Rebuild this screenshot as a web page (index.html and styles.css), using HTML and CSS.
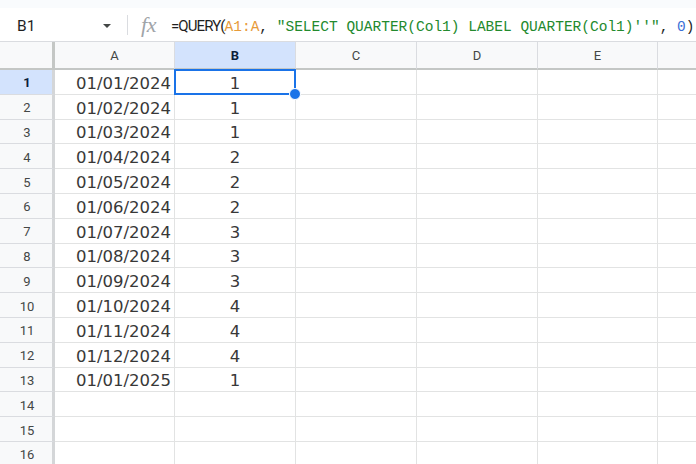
FILE: index.html
```html
<!DOCTYPE html>
<html>
<head>
<meta charset="utf-8">
<link rel="stylesheet" href="styles.css">
</head>
<body>
<div class="topstrip"></div>
<div class="fbar">
  <div class="namebox">
    <span class="nb-text">B1</span>
    <span class="nb-caret"></span>
  </div>
  <div class="fdivider"></div>
  <div class="fx">fx</div>
  <div class="formula"><span class="fn">=QUERY(</span><span class="mono"><span class="ref">A1:A</span>, <span class="str">"SELECT QUARTER(Col1) LABEL QUARTER(Col1)''"</span>, <span class="num">0</span>)</span></div>
</div>
<div class="sheet">
  <div class="corner"></div>
  <div class="ch">A</div>
  <div class="ch sel">B</div>
  <div class="ch">C</div>
  <div class="ch">D</div>
  <div class="ch">E</div>
  <div class="ch last"></div>

  <div class="rh sel">1</div><div class="c date">01/01/2024</div><div class="c mid selcell">1<div class="selbox"><div class="handle"></div></div></div><div class="c"></div><div class="c"></div><div class="c"></div><div class="c last"></div>
  <div class="rh">2</div><div class="c date">01/02/2024</div><div class="c mid">1</div><div class="c"></div><div class="c"></div><div class="c"></div><div class="c last"></div>
  <div class="rh">3</div><div class="c date">01/03/2024</div><div class="c mid">1</div><div class="c"></div><div class="c"></div><div class="c"></div><div class="c last"></div>
  <div class="rh">4</div><div class="c date">01/04/2024</div><div class="c mid">2</div><div class="c"></div><div class="c"></div><div class="c"></div><div class="c last"></div>
  <div class="rh">5</div><div class="c date">01/05/2024</div><div class="c mid">2</div><div class="c"></div><div class="c"></div><div class="c"></div><div class="c last"></div>
  <div class="rh">6</div><div class="c date">01/06/2024</div><div class="c mid">2</div><div class="c"></div><div class="c"></div><div class="c"></div><div class="c last"></div>
  <div class="rh">7</div><div class="c date">01/07/2024</div><div class="c mid">3</div><div class="c"></div><div class="c"></div><div class="c"></div><div class="c last"></div>
  <div class="rh">8</div><div class="c date">01/08/2024</div><div class="c mid">3</div><div class="c"></div><div class="c"></div><div class="c"></div><div class="c last"></div>
  <div class="rh">9</div><div class="c date">01/09/2024</div><div class="c mid">3</div><div class="c"></div><div class="c"></div><div class="c"></div><div class="c last"></div>
  <div class="rh">10</div><div class="c date">01/10/2024</div><div class="c mid">4</div><div class="c"></div><div class="c"></div><div class="c"></div><div class="c last"></div>
  <div class="rh">11</div><div class="c date">01/11/2024</div><div class="c mid">4</div><div class="c"></div><div class="c"></div><div class="c"></div><div class="c last"></div>
  <div class="rh">12</div><div class="c date">01/12/2024</div><div class="c mid">4</div><div class="c"></div><div class="c"></div><div class="c"></div><div class="c last"></div>
  <div class="rh">13</div><div class="c date">01/01/2025</div><div class="c mid">1</div><div class="c"></div><div class="c"></div><div class="c"></div><div class="c last"></div>
  <div class="rh">14</div><div class="c"></div><div class="c"></div><div class="c"></div><div class="c"></div><div class="c"></div><div class="c last"></div>
  <div class="rh">15</div><div class="c"></div><div class="c"></div><div class="c"></div><div class="c"></div><div class="c"></div><div class="c last"></div>
  <div class="rh">16</div><div class="c"></div><div class="c"></div><div class="c"></div><div class="c"></div><div class="c"></div><div class="c last"></div>
</div>
</body>
</html>
```
FILE: styles.css
```css
html, body {
  margin: 0;
  padding: 0;
  width: 696px;
  height: 464px;
  overflow: hidden;
  background: #ffffff;
  font-family: Roboto, "Liberation Sans", Arial, sans-serif;
}
.topstrip {
  height: 8px;
  background: #f9fbfd;
}
.fbar {
  height: 33px;
  border-bottom: 1px solid #dadce0;
  display: flex;
  align-items: center;
  background: #ffffff;
}
.namebox {
  width: 127px;
  display: flex;
  align-items: center;
  box-sizing: border-box;
  padding-left: 17px;
  padding-top: 2px;
}
.nb-text {
  font-size: 15.5px;
  color: #1f1f1f;
  flex: 1;
}
.nb-caret {
  width: 0;
  height: 0;
  border-left: 4.5px solid transparent;
  border-right: 4.5px solid transparent;
  border-top: 4.5px solid #444746;
  margin-right: 16px;
  margin-top: 1px;
}
.fdivider {
  width: 1px;
  height: 20px;
  background: #dadce0;
}
.fx {
  font-family: "Liberation Serif", "DejaVu Serif", serif;
  font-style: italic;
  font-size: 22px;
  color: #a0a4a8;
  margin-left: 13px;
  width: 30px;
  letter-spacing: -0.3px;
  margin-top: 0;
}
.formula {
  white-space: nowrap;
  color: #1f1f1f;
  font-size: 15px;
  padding-top: 2px;
}
.fn {
  font-family: Roboto, "Liberation Sans", sans-serif;
  font-size: 15px;
  letter-spacing: -0.9px;
}
.mono {
  font-family: "Liberation Mono", "DejaVu Sans Mono", monospace;
  font-size: 14.5px;
}
.ref { color: #e79b3a; }
.str { color: #238a2e; }
.num { color: #3b6fd6; }

.sheet {
  display: grid;
  grid-template-columns: 55px 120px 121px 121px 121px 120px 1fr;
  grid-template-rows: 28px repeat(16, 24.8px);
}
.corner {
  background: #f8f9fa;
  border-right: 3px solid #c4c7c5;
  border-bottom: 2px solid #c4c7c5;
  box-sizing: border-box;
}
.ch {
  background: #f8f9fa;
  border-right: 1px solid #dadce0;
  border-bottom: 2px solid #c4c7c5;
  box-sizing: border-box;
  display: flex;
  align-items: center;
  justify-content: center;
  font-size: 13px;
  color: #444746;
  padding-top: 1px;
}
.ch.sel {
  background: #d3e3fd;
  color: #0b1f3a;
  font-weight: bold;
}
.ch.last { border-right: none; }
.rh {
  background: #f8f9fa;
  border-right: 3px solid #d4d6d8;
  border-bottom: 1px solid #dadce0;
  box-sizing: border-box;
  display: flex;
  align-items: center;
  justify-content: center;
  font-size: 13px;
  color: #444746;
  padding-left: 2px;
  padding-top: 2px;
}
.rh.sel {
  background: #d3e3fd;
  color: #0b1f3a;
  font-weight: bold;
}
.c {
  border-right: 1px solid #e2e3e3;
  border-bottom: 1px solid #e2e3e3;
  box-sizing: border-box;
  font-family: "DejaVu Sans", Verdana, sans-serif;
  font-size: 16.5px;
  color: #383838;
  display: flex;
  align-items: center;
  padding: 3px 3px 0 3px;
  white-space: nowrap;
}
.c.last { border-right: none; }
.c.date { justify-content: flex-end; }
.c.mid { justify-content: center; }
.selcell { position: relative; }
.selbox {
  position: absolute;
  left: -1px;
  top: -1px;
  right: -1px;
  bottom: -1px;
  border: 2px solid #1a73e8;
}
.handle {
  position: absolute;
  right: -7px;
  bottom: -7px;
  width: 10px;
  height: 10px;
  border-radius: 50%;
  background: #1a73e8;
  border: 1px solid #ffffff;
}
```
